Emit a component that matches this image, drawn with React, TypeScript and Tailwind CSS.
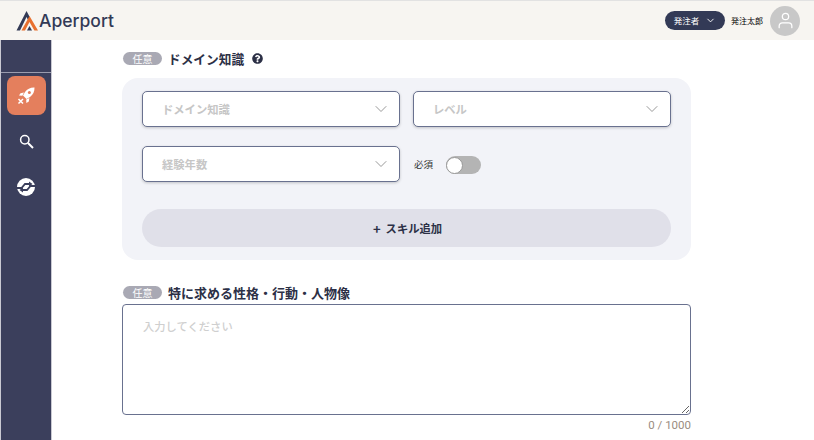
import { ChevronDown } from "lucide-react";
import { FaQuestionCircle } from "react-icons/fa";
import { FiUser } from "react-icons/fi";

const jp = "font-['Noto_Sans_CJK_JP','Noto_Sans',sans-serif]";

function Logo() {
  return (
    <svg width="24" height="21" viewBox="0 0 24 21">
      <path d="M0.5 20.5 L10.5 1 L14 7.5 L12.3 10.6 L10.5 7 L4 20.5 Z" fill="#333a56" />
      <path d="M5.5 20.5 L13.5 6 L22 20.5 L18.4 20.5 L13.5 12 L9 20.5 Z" fill="#e8702f" />
      <path d="M11 20.5 L13.5 16 L16 20.5 Z" fill="#333a56" />
    </svg>
  );
}

function Rocket() {
  return (
    <svg width="20" height="20" viewBox="0 0 20 20" fill="#fff">
      <path d="M18.5 1.5 C14.5 1.3 11.3 3 9 6 L7 9.5 L10.5 13 L14 11 C17 8.7 18.7 5.5 18.5 1.5 Z" />
      <path d="M8 6.6 L4.5 7.2 L3 9.6 L6.4 9.8 Z" />
      <path d="M13.4 12 L12.8 15.5 L10.4 17 L10.2 13.6 Z" />
      <circle cx="13.4" cy="6.6" r="1.5" fill="#e47f5d" />
      <path d="M2.5 13 L7 17.5 M7 13 L2.5 17.5" stroke="#fff" strokeWidth="1.5" fill="none" />
    </svg>
  );
}

function Search() {
  return (
    <svg width="15" height="15" viewBox="0 0 15 15" fill="none" stroke="#fff">
      <circle cx="5.8" cy="5.8" r="4.2" strokeWidth="1.5" />
      <path d="M9 9 L14 14" strokeWidth="2" />
    </svg>
  );
}

function Exchange() {
  return (
    <svg width="18" height="18" viewBox="0 0 18 18">
      <circle cx="9" cy="9" r="9" fill="#fff" />
      <path d="M0 10 H4.5 L8 6 H13" fill="none" stroke="#3b3f5c" strokeWidth="1.8" />
      <path d="M18 8 H13.5 L10 12 H5" fill="none" stroke="#3b3f5c" strokeWidth="1.8" />
      <path d="M12 3.4 L15.5 6 L12 8.4 Z" fill="#3b3f5c" />
      <path d="M6 9.6 L2.5 12 L6 14.6 Z" fill="#3b3f5c" />
    </svg>
  );
}

function Badge() {
  return (
    <span className="ml-px flex h-[13px] w-[39px] items-center justify-center rounded-full bg-[#a9a9b4] text-[10px] leading-none text-white">
      任意
    </span>
  );
}

function SelectBox({ label, className }: { label: string; className: string }) {
  return (
    <div
      className={`flex items-center justify-between rounded-[5px] border border-[#69718f] bg-white pl-[19px] pr-[8px] shadow-[0_1px_3px_rgba(0,0,0,0.2)] ${className}`}
    >
      <span className="text-[11.3px] font-bold text-[#c6c6c6]">{label}</span>
      <ChevronDown size={20} strokeWidth={1.2} className="text-[#999999]" />
    </div>
  );
}

export default function App() {
  return (
    <div className={`flex h-[440px] w-[814px] flex-col overflow-hidden bg-white ${jp}`}>
      <header className="flex h-[40px] shrink-0 items-center justify-between border-t border-[#e2e2e2] bg-[#f7f5f1] pl-4 pr-[14px]">
        <div className="flex items-center">
          <Logo />
          <span className="-ml-px font-['Inter',sans-serif] text-[17.5px] font-medium leading-none text-[#333a56]">
            Aperport
          </span>
        </div>
        <div className="flex items-center">
          <div className="flex h-[19px] w-[60px] items-center justify-center gap-[6px] rounded-full bg-[#333a56] text-[8.5px] text-white">
            発注者
            <ChevronDown size={11} strokeWidth={2} />
          </div>
          <span className="ml-[6px] text-[8px] text-black">発注太郎</span>
          <div className="ml-[7px] flex h-[30px] w-[30px] items-center justify-center rounded-full bg-[#c8c8c8]">
            <FiUser size={19} strokeWidth={1.6} className="text-white" />
          </div>
        </div>
      </header>

      <div className="flex min-h-0 flex-1">
        <aside className="flex w-[52px] shrink-0 flex-col items-center border-x border-x-[#c9c9d2] bg-[#3b3f5c]">
          <div className="mt-[32px] h-px w-full bg-[#9a9cae]" />
          <div className="mt-[3px] flex h-[39px] w-[39px] items-center justify-center rounded-[8px] bg-[#e47f5d]">
            <Rocket />
          </div>
          <div className="mt-[19px]">
            <Search />
          </div>
          <div className="mt-[29px]">
            <Exchange />
          </div>
        </aside>

        <main className="min-w-0 flex-1 pl-[70px]">
          <div className="w-[569px]">
            <div className="mt-[10px] flex h-[17px] items-center">
              <Badge />
              <span className="ml-[6px] text-[12.7px] font-bold text-[#2c3046]">ドメイン知識</span>
              <FaQuestionCircle size={11} className="ml-[8px] text-[#2c3046]" />
            </div>

            <section className="mt-[11px] h-[182px] rounded-[16px] bg-[#f2f3f8] px-5 pt-[13px]">
              <div className="flex gap-[13px]">
                <SelectBox label="ドメイン知識" className="h-[36px] w-[258px]" />
                <SelectBox label="レベル" className="h-[36px] w-[258px]" />
              </div>
              <div className="mt-[19px] flex items-center">
                <SelectBox label="経験年数" className="h-[36px] w-[258px]" />
                <span className="ml-[14px] text-[9.5px] text-[#333]">必須</span>
                <div className="ml-[13px] mt-[2px] flex h-[18px] w-[35px] items-center rounded-full bg-[#b4b4b4]">
                  <div className="h-[17px] w-[17px] rounded-full border border-[#999] bg-white" />
                </div>
              </div>
              <button className="mt-[27px] flex h-[38px] w-full items-center justify-center gap-[5px] rounded-full bg-[#e0e0e9] pl-[2px] text-[11.3px] font-bold text-[#2c3046]">
                <span className="text-[13px] leading-none">+</span>
                スキル追加
              </button>
            </section>

            <div className="mt-[24px] flex h-[17px] items-center">
              <Badge />
              <span className="ml-[6px] text-[13px] font-bold text-[#2c3046]">特に求める性格・行動・人物像</span>
            </div>

            <textarea
              placeholder="入力してください"
              className="mt-[3px] block h-[111px] w-full resize-y rounded-[4px] border border-[#69718f] bg-white px-5 pb-3 pt-[13px] text-[11.3px] font-medium outline-none placeholder:text-[#cfcfcf]"
            />
            <div className="mt-[3px] text-right font-['Roboto',sans-serif] text-[11.5px] leading-[15px] text-[#9a8c80]">
              0 / 1000
            </div>
          </div>
        </main>
      </div>
    </div>
  );
}
